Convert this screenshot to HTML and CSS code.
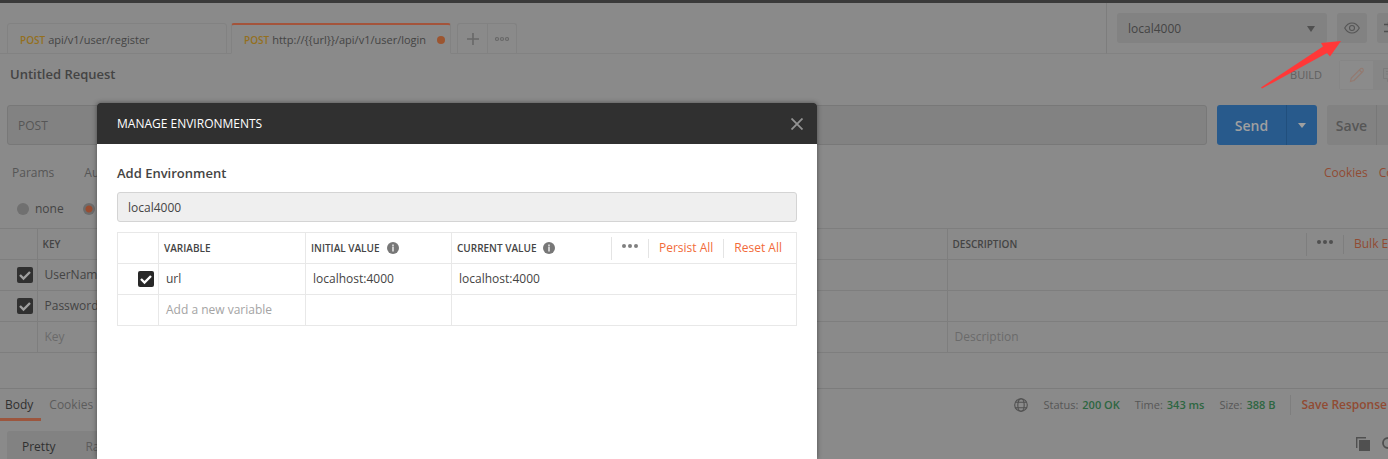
FILE: index.html
```html
<!DOCTYPE html>
<html lang="en">
<head>
<meta charset="utf-8">
<title>Manage Environments</title>
<link rel="stylesheet" href="styles.css">
</head>
<body>
<div class="app">
  <header class="topbar">
    <nav class="tabs">
      <a class="tab" href="#register"><span class="verb">POST</span>api/v1/user/register</a>
      <a class="tab tab-active" href="#login"><span class="verb">POST</span>http://{{url}}/api/v1/user/login<span class="unsaved"></span></a>
      <div class="tab-tools">
        <button class="tab-tool" aria-label="New tab"><svg width="12" height="12" viewBox="0 0 12 12"><path d="M6 0v12M0 6h12" stroke="#686868" stroke-width="1.6"/></svg></button>
        <button class="tab-tool" aria-label="Tab options"><svg width="14" height="6" viewBox="0 0 14 6"><g fill="none" stroke="#686868" stroke-width="1.2"><circle cx="2" cy="3" r="1.5"/><circle cx="7" cy="3" r="1.5"/><circle cx="12" cy="3" r="1.5"/></g></svg></button>
      </div>
    </nav>
    <div class="env">
      <div class="select-wrap">
        <select class="env-select" aria-label="Environment"><option>local4000</option></select>
        <svg class="caret" width="8" height="6" viewBox="0 0 8 6"><path d="M0 0h8L4 6z" fill="#505050"/></svg>
      </div>
      <button class="icon-button" aria-label="Environment quick look"><svg width="16" height="12" viewBox="0 0 16 12"><g fill="none" stroke="#555" stroke-width="1.1"><path d="M.7 6Q3.5 1 8 1t7.300 5Q12.500 11 8 11T.7 6z"/><circle cx="8" cy="6" r="2.500"/></g></svg></button>
      <button class="icon-button" aria-label="Settings"><svg width="16" height="14" viewBox="0 0 16 14"><path d="M0 3.500h16M0 10.500h16M4.500 1v5M10.500 8v5" fill="none" stroke="#505050" stroke-width="1.400"/></svg></button>
    </div>
  </header>

  <section class="title-row">
    <h1 class="request-name">Untitled Request</h1>
    <div class="modes">
      <span class="mode-label">BUILD</span>
      <div class="mode-toggle">
        <button class="mode mode-on" aria-label="Build"><svg width="16" height="16" viewBox="0 0 16 16"><g fill="none" stroke="#94796f" stroke-width="1.100"><path d="M1.500 14.500l.8-3.500L11.500 1.800q1.300-1 2.300 0t.2 2.500L5 13.500z"/><path d="M10.300 3l2.600 2.500"/></g></svg></button>
        <button class="mode" aria-label="Comments"><svg width="16" height="16" viewBox="0 0 16 16"><path d="M1.500 1.500h13v10H8l-2.500 3v-3h-4zM4 4.500h8M4 7h8" fill="none" stroke="#7b7b7b"/></svg></button>
      </div>
    </div>
  </section>

  <section class="url-row">
    <div class="url-box">
      <select class="method" aria-label="Method"><option>POST</option></select>
      <input class="url" aria-label="Request URL">
    </div>
    <div class="send-group">
      <button class="send">Send</button>
      <button class="send-more" aria-label="Send options"><svg width="8" height="5" viewBox="0 0 8 5"><path d="M0 0h8L4 5z" fill="#a0a0a0"/></svg></button>
    </div>
    <div class="save-group">
      <button class="save">Save</button>
      <button class="save-more" aria-label="Save options"><svg width="8" height="5" viewBox="0 0 8 5"><path d="M0 0h8L4 5z" fill="#555"/></svg></button>
    </div>
  </section>

  <section class="sections">
    <nav class="section-tabs"><a href="#params">Params</a><a href="#auth">Au</a></nav>
    <nav class="section-links"><a href="#cookies">Cookies</a><a href="#code">Code</a></nav>
  </section>

  <section class="body-types">
    <label class="radio"><input type="radio" name="type">none</label>
    <label class="radio"><input type="radio" name="type" aria-label="form-data" checked></label>
  </section>

  <table class="params">
    <thead>
      <tr><th class="check-col"></th><th>KEY</th><th class="desc-col"><div class="head-cell">DESCRIPTION
        <div class="head-tools"><button class="dots" aria-label="Columns"><svg width="16" height="4" viewBox="0 0 16 4"><g fill="#505050"><circle cx="2" cy="2" r="2"/><circle cx="8" cy="2" r="2"/><circle cx="14" cy="2" r="2"/></g></svg></button><button class="link-button">Bulk Edit</button></div></div></th></tr>
    </thead>
    <tbody>
      <tr><td><input class="tick" type="checkbox" aria-label="Use UserName" checked></td><td>UserName</td><td></td></tr>
      <tr><td><input class="tick" type="checkbox" aria-label="Use Password" checked></td><td>Password</td><td></td></tr>
      <tr class="blank"><td></td><td>Key</td><td>Description</td></tr>
    </tbody>
  </table>

  <section class="response">
    <div class="response-bar">
      <nav class="response-tabs"><a class="current" href="#body">Body</a><a href="#response-cookies">Cookies</a></nav>
      <div class="status">
        <svg class="globe" width="14" height="14" viewBox="0 0 14 14"><g fill="none" stroke="#505050" stroke-width="1.100"><circle cx="7" cy="7" r="6.300"/><ellipse cx="7" cy="7" rx="3.200" ry="6.300"/><path d="M1.500 4.300h11M1.500 9.700h11"/></g></svg>
        <span class="stat">Status:<b>200 OK</b></span>
        <span class="stat">Time:<b>343 ms</b></span>
        <span class="stat">Size:<b>388 B</b></span>
        <button class="save-response">Save Response</button>
      </div>
    </div>
    <div class="view-bar">
      <div class="views"><button class="view view-on">Pretty</button><button class="view">Raw</button></div>
      <div class="view-tools">
        <button class="plain" aria-label="Copy"><svg width="14" height="14" viewBox="0 0 14 14"><path d="M3 3h11v11H3z" fill="#505050"/><path d="M.7 11V.7H10" fill="none" stroke="#505050" stroke-width="1.400"/></svg></button>
        <button class="plain" aria-label="Search"><svg width="14" height="14" viewBox="0 0 14 14"><circle cx="6" cy="6" r="5" fill="none" stroke="#505050" stroke-width="1.800"/><path d="M9.500 9.500l4 4" stroke="#505050" stroke-width="1.800"/></svg></button>
      </div>
    </div>
  </section>
</div>

<svg class="pointer" width="84" height="50" viewBox="0 0 84 50"><path d="M1 47.500L63 6.500 61 3 81 1 70 16.500 67 13 2 48.500z" fill="#ff3838"/></svg>

<div class="dialog" role="dialog" aria-labelledby="dialog-title">
  <header class="dialog-head">
    <h2 class="dialog-title" id="dialog-title">MANAGE ENVIRONMENTS</h2>
    <button class="plain" aria-label="Close"><svg width="12" height="12" viewBox="0 0 12 12"><path d="M.5.5l11 11M11.500.5l-11 11" stroke="#929292" stroke-width="1.800"/></svg></button>
  </header>
  <div class="dialog-body">
    <label class="field-label" for="env-name">Add Environment</label>
    <input class="field" id="env-name" value="local4000">
    <table class="variables">
      <thead>
        <tr>
          <th class="pick-col"></th>
          <th class="name-col">VARIABLE</th>
          <th class="initial-col"><div class="head-cell">INITIAL VALUE<svg class="info" width="12" height="12" viewBox="0 0 12 12"><circle cx="6" cy="6" r="6" fill="#777"/><path d="M6 2.500v2M6 5v4.500" stroke="#e4e4e4" stroke-width="1.600"/></svg></div></th>
          <th><div class="head-cell">CURRENT VALUE<svg class="info" width="12" height="12" viewBox="0 0 12 12"><circle cx="6" cy="6" r="6" fill="#777"/><path d="M6 2.500v2M6 5v4.500" stroke="#e4e4e4" stroke-width="1.600"/></svg>
            <div class="head-tools"><button class="dots" aria-label="More"><svg width="16" height="4" viewBox="0 0 16 4"><g fill="#808080"><circle cx="2" cy="2" r="2"/><circle cx="8" cy="2" r="2"/><circle cx="14" cy="2" r="2"/></g></svg></button><button class="link-button">Persist All</button><button class="link-button">Reset All</button></div></div></th>
        </tr>
      </thead>
      <tbody>
        <tr><td class="pick"><input class="tick" type="checkbox" aria-label="Use url" checked></td><td>url</td><td>localhost:4000</td><td>localhost:4000</td></tr>
        <tr class="blank"><td></td><td>Add a new variable</td><td></td><td></td></tr>
      </tbody>
    </table>
  </div>
</div>
</body>
</html>
```

FILE: styles.css
```css
* { box-sizing: border-box; }

html, body { height: 100%; }

body {
  margin: 0;
  position: relative;
  overflow: hidden;
  background: #8a8a8a;
  color: #444;
  font: 12px/16px "Open Sans", "Noto Sans", sans-serif;
}

button, input, select { font: inherit; color: inherit; margin: 0; }
button { border: 0; padding: 0; background: none; display: flex; align-items: center; justify-content: center; }
a { color: inherit; text-decoration: none; }
svg { display: block; flex: none; }
h1, h2 { margin: 0; font-size: 12px; }

/* The workspace runs on past the right edge of the window. */
.app { width: calc(100% + 32px); border-top: 3px solid #3a3a3a; }

.topbar { display: flex; height: 51px; }
.tabs { flex: 1; display: flex; align-items: flex-end; padding-left: 7px; border-bottom: 1px solid #828282; }
.tab {
  display: flex; align-items: center; gap: 3px; width: 220px; height: 31px; margin: 0 4px -1px 0; padding: 2px 12px 0;
  border: 1px solid #828282; border-radius: 3px 3px 0 0; font-size: 11px;
}
.tab-active { background: #8a8a8a; border-top: 2px solid #a4543b; border-bottom-color: #8a8a8a; margin-right: 6px; padding: 1px 5px 0 12px; }
.verb { color: #94701e; font-size: 10px; font-weight: 600; }
.unsaved { width: 8px; height: 8px; margin-left: auto; border-radius: 50%; background: #9c5530; }
.tab-tools { display: flex; height: 30px; border: 1px solid #828282; border-bottom: 0; border-radius: 3px 3px 0 0; }
.tab-tool { width: 29px; }
.tab-tool + .tab-tool { border-left: 1px solid #828282; }

.env { display: flex; gap: 10px; width: 314px; padding: 10px 0 0 10px; border-left: 1px solid #7d7d7d; border-bottom: 1px solid #828282; }
.select-wrap { position: relative; width: 210px; height: 30px; }
.env-select { appearance: none; width: 100%; height: 100%; padding: 2px 11px 0; border: 0; border-radius: 3px; background: #828282; }
.caret { position: absolute; right: 12px; top: 13px; pointer-events: none; }
.icon-button { width: 30px; height: 30px; border-radius: 3px; background: #828282; }

.title-row { display: flex; justify-content: space-between; align-items: center; height: 41px; padding: 0 13px 0 10px; }
.request-name { padding-bottom: 2px; font-weight: 600; font-size: 13px; }
.modes { display: flex; align-items: center; gap: 17px; }
.mode-label { color: #606060; font-size: 11px; }
.mode-toggle { display: flex; height: 30px; padding: 1px; border-radius: 3px; background: #868686; }
.mode { width: 33px; }
.mode-on { background: #8b8b8b; }

.url-row { display: flex; gap: 10px; height: 50px; padding: 10px 13px 0 7px; color: #565656; }
.url-box { flex: 1; display: flex; border: 1px solid #787878; border-radius: 3px; background: #828282; }
.method { appearance: none; width: 110px; padding: 2px 10px 0; border: 0; background: none; }
.url { flex: 1; min-width: 0; border: 0; background: none; }
.send-group { display: flex; width: 100px; border-radius: 3px; background: #285a8c; color: #a0a0a0; }
.send { flex: 1; padding-top: 2px; font-size: 14px; font-weight: 600; }
.send-more { width: 31px; border-left: 1px solid #214f7d; }
.save-group { display: flex; width: 80px; border-radius: 3px; background: #828282; }
.save { flex: 1; padding-top: 2px; font-size: 14px; font-weight: 600; }
.save-more { width: 31px; border-left: 1px solid #787878; }

.sections { display: flex; justify-content: space-between; padding: 20px 0 0 12px; color: #565656; }
.section-tabs { display: flex; gap: 30px; }
.section-links { display: flex; gap: 11px; width: 96px; color: #914b33; }

.body-types { display: flex; gap: 19px; padding: 20px 0 11px 17px; }
.radio { display: flex; align-items: center; gap: 6px; height: 16px; }
.radio input { appearance: none; width: 12px; height: 12px; border-radius: 50%; background: #707070; }
.radio input:checked { background: radial-gradient(circle, #994c30 3px, #6c6c6c 4px); }

table { width: 100%; border-collapse: collapse; table-layout: fixed; }
th, td { height: 31px; padding: 0 7px; border: 1px solid #7e7e7e; text-align: left; }
th { padding: 0 5px; font-size: 10px; font-weight: 600; }
.params th:first-child, .params td:first-child { border-left: 0; text-align: right; padding: 0 4px; }
.params th:last-child, .params td:last-child { border-right: 0; }
.check-col { width: 37px; }
.desc-col { width: 473px; }
.blank td { color: #6a6a6a; }
.head-cell { display: flex; align-items: center; }
.head-tools { display: flex; align-items: center; margin-left: auto; font-size: 12px; font-weight: 400; }
.params .head-tools { width: 109px; }
.dots { width: 37px; height: 23px; padding-bottom: 4px; border-left: 1px solid #7e7e7e; }
.link-button { height: 19px; padding: 0 10px; border-left: 1px solid #7e7e7e; color: #914b33; white-space: nowrap; }
.tick {
  appearance: none; display: inline-block; width: 16px; height: 16px; border-radius: 2px; vertical-align: middle;
  background: #303030 url("data:image/svg+xml,%3Csvg xmlns='http://www.w3.org/2000/svg' viewBox='0 0 16 16'%3E%3Cpath d='M3 8l3.500 3.500L13 5' fill='none' stroke='%23a0a0a0' stroke-width='2.400'/%3E%3C/svg%3E");
}

.response { margin-top: 35px; border-top: 1px solid #7c7c7c; }
.response-bar { display: flex; justify-content: space-between; height: 32px; }
.response-tabs { display: flex; color: #5c5c5c; }
.response-tabs a { padding: 8px 4px 0 8px; }
.response-tabs .current { padding: 8px 8px 0 5px; border-bottom: 3px solid #9c563e; color: #303030; }
.status { display: flex; align-items: center; gap: 15px; height: 32px; padding-right: 33px; font-size: 11px; color: #565656; }
.stat b { margin-left: 4px; color: #2d6641; font-weight: 600; }
.save-response { height: 20px; padding-left: 10px; border-left: 1px solid #7e7e7e; color: #914b33; font-size: 12px; font-weight: 600; }
.view-bar { display: flex; justify-content: space-between; padding: 10px 24px 0 7px; }
.views { display: flex; width: 240px; height: 30px; border-radius: 3px 3px 0 0; background: #828282; color: #5c5c5c; }
.view { padding: 2px 15px 0; }
.view-on { color: #303030; }
.view-tools { display: flex; align-items: center; gap: 12px; padding-bottom: 4px; }

.pointer { position: absolute; right: 44px; top: 40px; }

/* The dialog floats over the workspace. */
.dialog {
  position: absolute; left: 97px; top: 103px; bottom: 0; width: 720px;
  border-radius: 3px 3px 0 0; background: #fff; box-shadow: 0 0 5px rgba(0, 0, 0, .45); overflow: hidden;
}
.dialog-head { display: flex; align-items: center; justify-content: space-between; height: 41px; padding: 0 14px 0 20px; background: #303030; color: #fff; }
.dialog-title { font-weight: 400; }
.dialog-body { padding: 21px 20px 0; }
.field-label { display: block; margin-bottom: 11px; font-size: 13px; font-weight: 600; }
.field { display: block; width: 100%; height: 30px; margin-bottom: 10px; padding: 0 10px; border: 1px solid #d4d4d4; border-radius: 3px; background: #efefef; }
.variables th, .variables td { border-color: #e8e8e8; }
.pick-col { width: 41px; }
.name-col { width: 147px; }
.initial-col { width: 146px; }
.variables .pick { padding: 0 4px; text-align: right; }
.variables .blank td { color: #a4a4a4; }
.variables .tick { background-color: #282828; background-image: url("data:image/svg+xml,%3Csvg xmlns='http://www.w3.org/2000/svg' viewBox='0 0 16 16'%3E%3Cpath d='M3 8l3.500 3.500L13 5' fill='none' stroke='%23fff' stroke-width='2.400'/%3E%3C/svg%3E"); }
.info { margin-left: 7px; }
.variables .dots, .variables .link-button { border-color: #e4e4e4; }
.variables .link-button { color: #f26b3a; }
.variables .link-button:last-child { padding-right: 9px; }
```
